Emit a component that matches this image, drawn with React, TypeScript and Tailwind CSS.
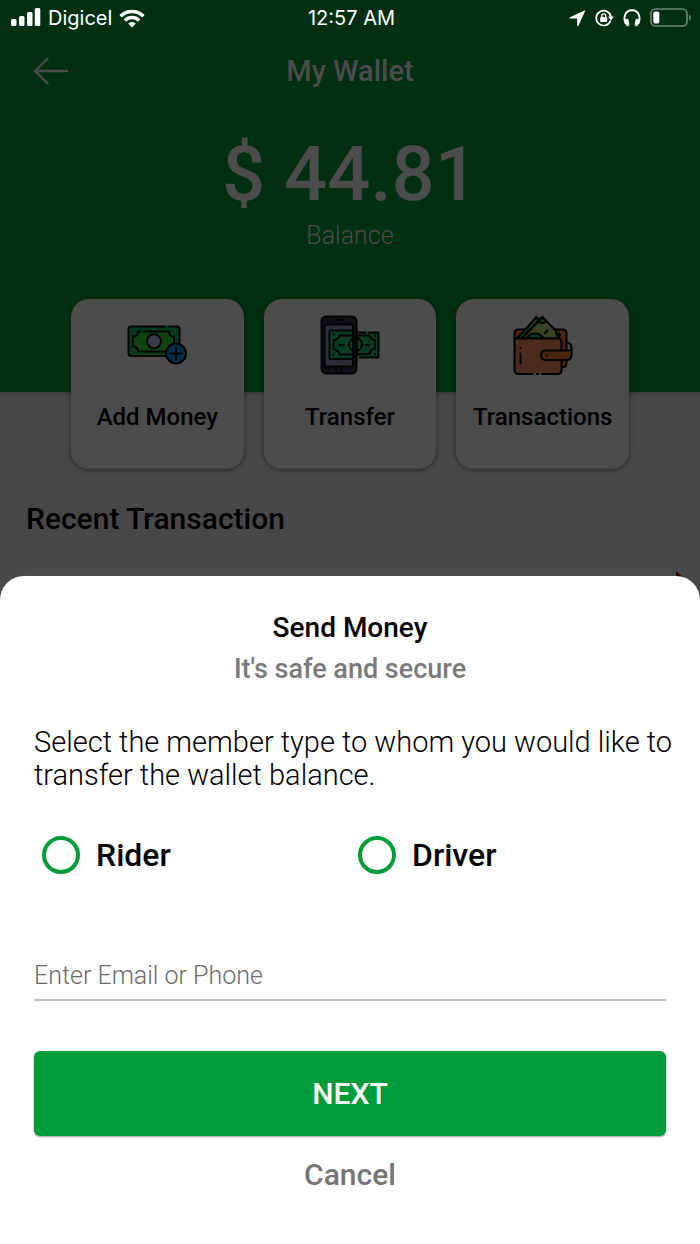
import { useState } from "react";
import type { ReactNode } from "react";

const SignalIcon = () => (
  <svg width="30" height="20" viewBox="0 0 30 20" fill="white" aria-hidden="true">
    <rect x="0" y="11" width="5.5" height="7" rx="1.5" />
    <rect x="8" y="8" width="5.5" height="10" rx="1.5" />
    <rect x="16" y="4" width="5.5" height="14" rx="1.5" />
    <rect x="23.8" y="0" width="5.5" height="18" rx="1.5" />
  </svg>
);

const WifiIcon = () => (
  <svg width="26" height="19" viewBox="0 0 26 19" fill="none" stroke="white" strokeWidth="3.4" aria-hidden="true">
    <path d="M1.6 7.3a16 16 0 0 1 22.8 0" />
    <path d="M5.8 11.5a10.2 10.2 0 0 1 14.4 0" />
    <path d="M13 18.5l-3.8-3.9a5.4 5.4 0 0 1 7.6 0z" fill="white" stroke="none" />
  </svg>
);

const LocationIcon = () => (
  <svg width="17" height="17" viewBox="0 0 17 17" fill="white" aria-hidden="true">
    <path d="M15.6.6 1 7.2c-.9.4-.7 1.4.3 1.4h6.5c.3 0 .4.1.4.4v6.3c0 1 1 1.3 1.4.3l6.3-14.1c.4-.8.4-1.2-.3-.9z" />
  </svg>
);

const RotationLockIcon = () => (
  <svg width="19" height="18" viewBox="0 0 19 18" fill="none" aria-hidden="true">
    <path d="M15.6 11.6A7.4 7.4 0 1 1 16 8.2" stroke="white" strokeWidth="1.7" />
    <path d="M13 7.6h5.8L16 11.4z" fill="white" />
    <rect x="5.2" y="8" width="7" height="5" rx=".8" fill="white" />
    <path d="M6.7 8V6.8a2 2 0 0 1 4 0V8" stroke="white" strokeWidth="1.3" />
  </svg>
);

const HeadphonesIcon = () => (
  <svg width="18" height="18" viewBox="0 0 18 18" fill="none" aria-hidden="true">
    <path d="M3 15C.2 10.5 1 1.2 9 1.2S17.8 10.5 15 15" stroke="white" strokeWidth="1.9" />
    <rect x="2.4" y="9.8" width="3.6" height="7.4" rx="1.7" fill="white" transform="rotate(-12 4.2 13.5)" />
    <rect x="12" y="9.8" width="3.6" height="7.4" rx="1.7" fill="white" transform="rotate(12 13.8 13.5)" />
  </svg>
);

const BatteryIcon = () => (
  <svg width="42" height="20" viewBox="0 0 42 20" fill="none" aria-hidden="true">
    <rect x="1" y="1" width="36" height="17" rx="4.5" stroke="#6f8876" strokeWidth="1.6" />
    <rect x="3.3" y="3.4" width="6" height="12.2" rx="2" fill="white" />
    <path d="M39 6.5c2.4 1 2.4 5 0 6z" fill="#6f8876" />
  </svg>
);

const AddMoneyIcon = () => (
  <svg width="60" height="60" viewBox="0 0 60 60" fill="none" stroke="#020403" strokeWidth="2" strokeLinecap="round" strokeLinejoin="round" aria-hidden="true">
    <rect x="1.5" y="11.5" width="51" height="29.5" rx="2.5" fill="#053a20" />
    <path d="M11 16.5h31c0 3 2 5 5 5v10c-3 0-5 2-5 5H11c0-3-2-5-5-5v-10c3 0 5-2 5-5z" fill="#104310" />
    <path d="M40.5 11.5h-1M15 16.5h1" stroke="#0a4526" />
    <circle cx="27" cy="26.3" r="7" fill="#3b3848" />
    <circle cx="49" cy="38.5" r="10" fill="#062b42" />
    <path d="M49 33v11M43.5 38.5h11" />
  </svg>
);

const TransferIcon = () => (
  <svg width="60" height="60" viewBox="0 0 60 60" fill="none" stroke="#020403" strokeWidth="1.9" strokeLinecap="round" strokeLinejoin="round" aria-hidden="true">
    <path d="M36 17.5h22.5v25H36z" fill="#073c20" />
    <rect x="1.5" y="1.5" width="35" height="57" rx="4.5" fill="#101116" />
    <rect x="4.5" y="9.5" width="28.5" height="42" rx="2" fill="#292f37" />
    <path d="M9.5 15.5H33v28.5H9.5z" fill="#083d22" />
    <path d="M13.5 25.5c4-1 5.5-2.5 6-5h13M13.5 25.5v8.5c4 1 5.5 3 6 5.5h13M13.5 19v.5M13.5 40v.5" />
    <path d="M37 20.5h12.5c.5 2.5 2 4 5.5 5v8c-3.5 1-5 3-5.5 5.5H37M55 20.5v.5M55 39v.5" />
    <path d="M36.5 15v30" strokeWidth="2.5" />
    <circle cx="35.5" cy="29.5" r="6.5" />
    <path d="M19.5 30H24M45.5 30H49M15.5 5h7M5 52c2 1 5 1 7 0" />
    <circle cx="19" cy="54.5" r="3.2" />
    <path d="M38.5 42.5H38M47.5 17.5H47" stroke="#155c34" />
  </svg>
);

const WalletIcon = () => (
  <svg width="60" height="60" viewBox="0 0 60 60" fill="none" stroke="#020202" strokeWidth="2" strokeLinecap="round" strokeLinejoin="round" aria-hidden="true">
    <path d="M53 27.5c3.5 0 5.5 2 5.5 5V40H53z" fill="#4c4c4c" />
    <path d="M5 14.5h45q3.5 0 3.5 4V48q0 4-3.5 4H46V24H1.5v-5q0-4.5 3.5-4.5z" fill="#4b240f" />
    <path d="M4 23.5 23.5 2l3 3L8 23.5z" fill="#0b3b23" />
    <path d="M9 23.5 29.5 2 47 20l-3 3.5z" fill="#384421" />
    <path d="M25.5 6.5q4 3 8 0L29.5 2zM47.5 20q-5 1-4.5-4M14 23c3-6 13-6 16 0zM32 18l2.5-2.5" fill="#0b3b23" />
    <path d="M1.5 23.5H45q3.5 0 3.5 4V55q0 4-4 4H6q-4.5 0-4.5-4.5z" fill="#4b2b1d" />
    <path d="M58.5 33v7q0 5-5 5H33q-5 0-5-4.7 0-4.8 5-4.8h20.5q5 0 5-2.5z" fill="#4b240f" />
    <path d="M7.5 38.5v10M7.5 33v.2" />
    <circle cx="33.5" cy="40.3" r=".3" />
    <path d="M21.5 59h.5M27 59h.5" stroke="#4c4c4c" />
  </svg>
);

interface ActionCardProps {
  label: string;
  icon: ReactNode;
}

const ActionCard = ({ label, icon }: ActionCardProps) => (
  <button
    type="button"
    className="flex flex-1 flex-col items-center rounded-[18px] bg-[#4c4c4c] pt-4 pb-9 shadow-[0_1px_5px_rgba(0,0,0,0.45)]"
  >
    {icon}
    <span className="mt-[26px] text-2xl leading-8 font-medium">{label}</span>
  </button>
);

interface MemberOptionProps {
  label: string;
  checked: boolean;
  onSelect: () => void;
}

const MemberOption = ({ label, checked, onSelect }: MemberOptionProps) => (
  <label className="flex h-10 items-center gap-4 px-2 text-[32px] font-medium">
    <input
      type="radio"
      name="member"
      checked={checked}
      onChange={onSelect}
      className="size-[38px] appearance-none rounded-full border-4 border-[#009c39] checked:bg-[#009c39] checked:shadow-[inset_0_0_0_5px_white]"
    />
    {label}
  </label>
);

const App = () => {
  const [member, setMember] = useState("");

  return (
    <div className="flex min-h-screen flex-col bg-[#484848] font-[Roboto,sans-serif] text-black">
      <header className="bg-[#002f11] pb-[140px] text-[#4c4c4c] shadow-[0_1px_4px_rgba(0,0,0,0.3)]">
        <div className="grid h-9 grid-cols-3 items-center pr-2 pl-[11px] font-[Inter,sans-serif] text-xl text-white">
          <div className="flex items-center gap-[7px]">
            <SignalIcon />
            <span>Digicel</span>
            <WifiIcon />
          </div>
          <p className="text-center">12:57 AM</p>
          <div className="flex items-center justify-end gap-[9px]">
            <LocationIcon />
            <RotationLockIcon />
            <HeadphonesIcon />
            <BatteryIcon />
          </div>
        </div>

        <div className="grid h-[71px] grid-cols-3 items-center px-8">
          <button type="button" aria-label="Back" className="justify-self-start">
            <svg width="36" height="28" viewBox="0 0 36 28" fill="none" stroke="#4c4c4c" strokeWidth="2.4" strokeLinecap="round" strokeLinejoin="round">
              <path d="M35 13H3M15.5 .8 3 13l12.500 12.200" />
            </svg>
          </button>
          <h1 className="text-center text-[29px] font-medium">My Wallet</h1>
        </div>

        <div className="pt-[29px] text-center">
          <p className="text-[76px] leading-[76px] font-medium">$ 44.81</p>
          <p className="mt-2 text-[25px] leading-8 font-light">Balance</p>
        </div>
      </header>

      <div className="-mt-[93px] flex gap-5 px-[71px]">
        <ActionCard label="Add Money" icon={<AddMoneyIcon />} />
        <ActionCard label="Transfer" icon={<TransferIcon />} />
        <ActionCard label="Transactions" icon={<WalletIcon />} />
      </div>

      <h2 className="mt-8 px-[26px] text-[30px] leading-9 font-medium">Recent Transaction</h2>

      <div className="mx-4 mt-8 flex h-10 justify-end rounded-2xl bg-[#4c4c4c] pr-[2px]">
        <svg width="6" height="12" viewBox="0 0 6 12" aria-hidden="true">
          <path d="M0 2l6 5v5H0z" fill="#3a0500" />
        </svg>
      </div>

      <section
        role="dialog"
        aria-labelledby="send-title"
        className="relative -mt-[33px] flex flex-1 flex-col rounded-t-[24px] bg-white px-[34px] pt-[34px] pb-12"
      >
        <h2 id="send-title" className="text-center text-[28px] leading-9 font-medium">
          Send Money
        </h2>
        <p className="mt-[5px] text-center text-[27px] leading-9 font-medium text-[#7a7a7a]">It's safe and secure</p>

        <p className="-mr-2 mt-[39px] text-[29px] leading-[33px] font-light">
          Select the member type to whom you would like to transfer the wallet balance.
        </p>

        <div role="radiogroup" aria-label="Member type" className="mt-[43px] grid grid-cols-2">
          <MemberOption label="Rider" checked={member === "rider"} onSelect={() => setMember("rider")} />
          <MemberOption label="Driver" checked={member === "driver"} onSelect={() => setMember("driver")} />
        </div>

        <input
          type="text"
          aria-label="Email or phone"
          placeholder="Enter Email or Phone"
          className="mt-[76px] h-[50px] w-full border-b-2 border-[#c0c0c0] text-[25px] font-light outline-none placeholder:text-[#6b6b6b]"
        />

        <button
          type="button"
          className="mt-[50px] h-[85px] rounded-md bg-[#009c39] text-[30px] font-medium text-white shadow-[0_1px_2px_rgba(0,0,0,0.4)]"
        >
          NEXT
        </button>
        <button type="button" className="mt-4 h-10 text-[30px] font-medium text-[#757575]">
          Cancel
        </button>
      </section>
    </div>
  );
};

export default App;
